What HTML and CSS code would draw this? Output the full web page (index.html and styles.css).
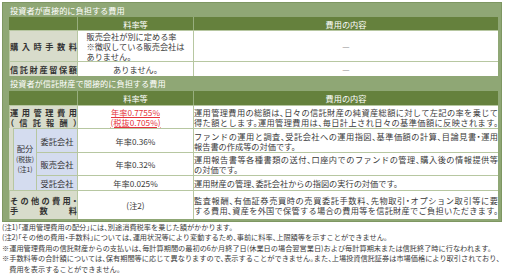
FILE: index.html
```html
<!DOCTYPE html>
<html lang="ja">
<head>
<meta charset="utf-8">
<title>費用</title>
<link rel="stylesheet" href="styles.css">
</head>
<body>
<div class="box">
  <div class="ttl">投資者が直接的に負担する費用</div>
  <table class="fee">
    <colgroup><col class="c-a"><col class="c-b"><col class="c-c"><col class="c-rate"><col class="c-desc"></colgroup>
    <thead>
      <tr class="hd"><th colspan="3"></th><th>料率等</th><th>費用の内容</th></tr>
    </thead>
    <tbody>
      <tr class="h32">
        <th colspan="3" class="lbl"><span class="jst">購入時手数料</span></th>
        <td class="rate"><span class="blk">販売会社が別に定める率<br>※徴収している販売会社は<br>ありません。</span></td>
        <td class="dash">—</td>
      </tr>
      <tr class="h15">
        <th colspan="3" class="lbl"><span class="jst">信託財産留保額</span></th>
        <td class="rate">ありません。</td>
        <td class="dash">—</td>
      </tr>
    </tbody>
  </table>
  <div class="ttl t2">投資者が信託財産で間接的に負担する費用</div>
  <table class="fee">
    <colgroup><col class="c-a"><col class="c-b"><col class="c-c"><col class="c-rate"><col class="c-desc"></colgroup>
    <thead>
      <tr class="hd h14"><th colspan="3"></th><th>料率等</th><th>費用の内容</th></tr>
    </thead>
    <tbody>
      <tr class="h23">
        <th colspan="3" class="lbl"><span class="jst">運用管理費用</span><span class="jst">（信託報酬）</span></th>
        <td class="rate red"><span class="u">年率0.7755%</span><br><span class="u">(税抜0.705%)</span></td>
        <td class="desc"><span class="full">運用管理費用の総額は、日々の信託財産の純資産総額に対して左記の率を乗じて</span><span class="full">得た額とします。運用管理費用は、毎日計上され日々の基準価額に反映されます。</span></td>
      </tr>
      <tr class="h24">
        <th rowspan="3" class="strip"></th>
        <th rowspan="3" class="sub haibun">配分<br><small>(税抜)<br>(注1)</small></th>
        <th class="sub">委託会社</th>
        <td class="rate">年率0.36%</td>
        <td class="desc"><span class="full">ファンドの運用と調査、受託会社への運用指図、基準価額の計算、目論見書・運用</span>報告書の作成等の対価です。</td>
      </tr>
      <tr class="h23">
        <th class="sub">販売会社</th>
        <td class="rate">年率0.32%</td>
        <td class="desc"><span class="full">運用報告書等各種書類の送付、口座内でのファンドの管理、購入後の情報提供等</span>の対価です。</td>
      </tr>
      <tr class="h15">
        <th class="sub">受託会社</th>
        <td class="rate">年率0.025%</td>
        <td class="desc">運用財産の管理、委託会社からの指図の実行の対価です。</td>
      </tr>
      <tr class="h29">
        <th colspan="3" class="lbl"><span class="jst">その他の費用・</span><span class="jst">手数料</span></th>
        <td class="rate">(注2)</td>
        <td class="desc"><span class="full">監査報酬、有価証券売買時の売買委託手数料、先物取引・オプション取引等に要</span><span class="full">する費用、資産を外国で保管する場合の費用等を信託財産でご負担いただきます。</span></td>
      </tr>
    </tbody>
  </table>
</div>
<div class="notes">
  <p>(注1)「運用管理費用の配分」には、別途消費税率を乗じた額がかかります。</p>
  <p>(注2)「その他の費用・手数料」については、運用状況等により変動するため、事前に料率、上限額等を示すことができません。</p>
  <p>※運用管理費用の信託財産からの支払いは、毎計算期間の最初の6か月終了日(休業日の場合翌営業日)および毎計算期末または信託終了時に行なわれます。</p>
  <p>※手数料等の合計額については、保有期間等に応じて異なりますので、表示することができません。また、上場投資信託証券は市場価格により取引されており、<br><span class="ind">費用を表示することができません。</span></p>
</div>
</body>
</html>
```
FILE: styles.css
```css
html, body {
  margin: 0;
  padding: 0;
  background: #ffffff;
}
body {
  padding: 2px 0 0 2px;
  font-family: "Noto Sans CJK JP", "Noto Sans", sans-serif;
  font-feature-settings: "halt";
  color: #3a3a3a;
  font-size: 8.2px;
}
.box {
  width: 500px;
  box-sizing: border-box;
  background: #8fa775;
  border: 1px solid #7e9762;
  padding: 0 3px 2px 6px;
}
.ttl {
  height: 14px;
  line-height: 14px;
  padding-left: 1px;
  color: #ffffff;
  font-size: 8.2px;
}
.t2 { height: 15px; line-height: 15px; }
.fee {
  width: 489px;
  table-layout: fixed;
  border-collapse: separate;
  border-spacing: 0;
  line-height: 10px;
}
.c-a { width: 4px; }
.c-b { width: 23px; }
.c-c { width: 41px; }
.c-rate { width: 116px; }
.c-desc { width: 305px; }
.fee th, .fee td {
  padding: 0;
  vertical-align: middle;
  font-size: 8.2px;
  border-top: 1px solid #b7c7a1;
  border-left: 1px solid #b7c7a1;
}
.hd { height: 13px; }
.hd th {
  background: #65813d;
  color: #ffffff;
  font-weight: normal;
  text-align: center;
  border-top: none;
  border-left: 1px solid #98ae7f;
}
.hd th:first-child { border-left: none; }
.h14 { height: 14px; }
.h15 { height: 15px; }
.h23 { height: 23px; }
.h24 { height: 24px; }
.h29 { height: 29px; }
.h32 { height: 31px; }
.lbl {
  background: #d8dccb;
  font-weight: bold;
  padding: 0 4px 0 3px;
  border-left: none;
  color: #333333;
}
.jst {
  display: block;
  text-align: justify;
  text-align-last: justify;
}
.strip {
  background: #d8dccb;
  border-top: none;
  border-left: none;
}
.fee .strip { border-top: none; border-left: none; }
.sub {
  background: #d4dcef;
  font-weight: normal;
  text-align: center;
  color: #333333;
}
.haibun { line-height: 9.5px; }
.haibun small { font-size: 6.8px; }
.rate {
  background: #ffffff;
  text-align: center;
}
.blk {
  display: inline-block;
  text-align: left;
}
.red { color: #e5333a; }
.u { text-decoration: underline; }
.dash {
  background: #ffffff;
  text-align: center;
  color: #8a8a8a;
}
.desc {
  background: #ffffff;
  text-align: left;
  padding: 0 3px 0 2px;
}
.full {
  display: block;
  text-align: justify;
  text-align-last: justify;
}
.notes {
  width: 504px;
  font-size: 7.2px;
  line-height: 10.4px;
  color: #3a3a3a;
}
.notes p { margin: 0; }
.ind { padding-left: 1em; }
```
